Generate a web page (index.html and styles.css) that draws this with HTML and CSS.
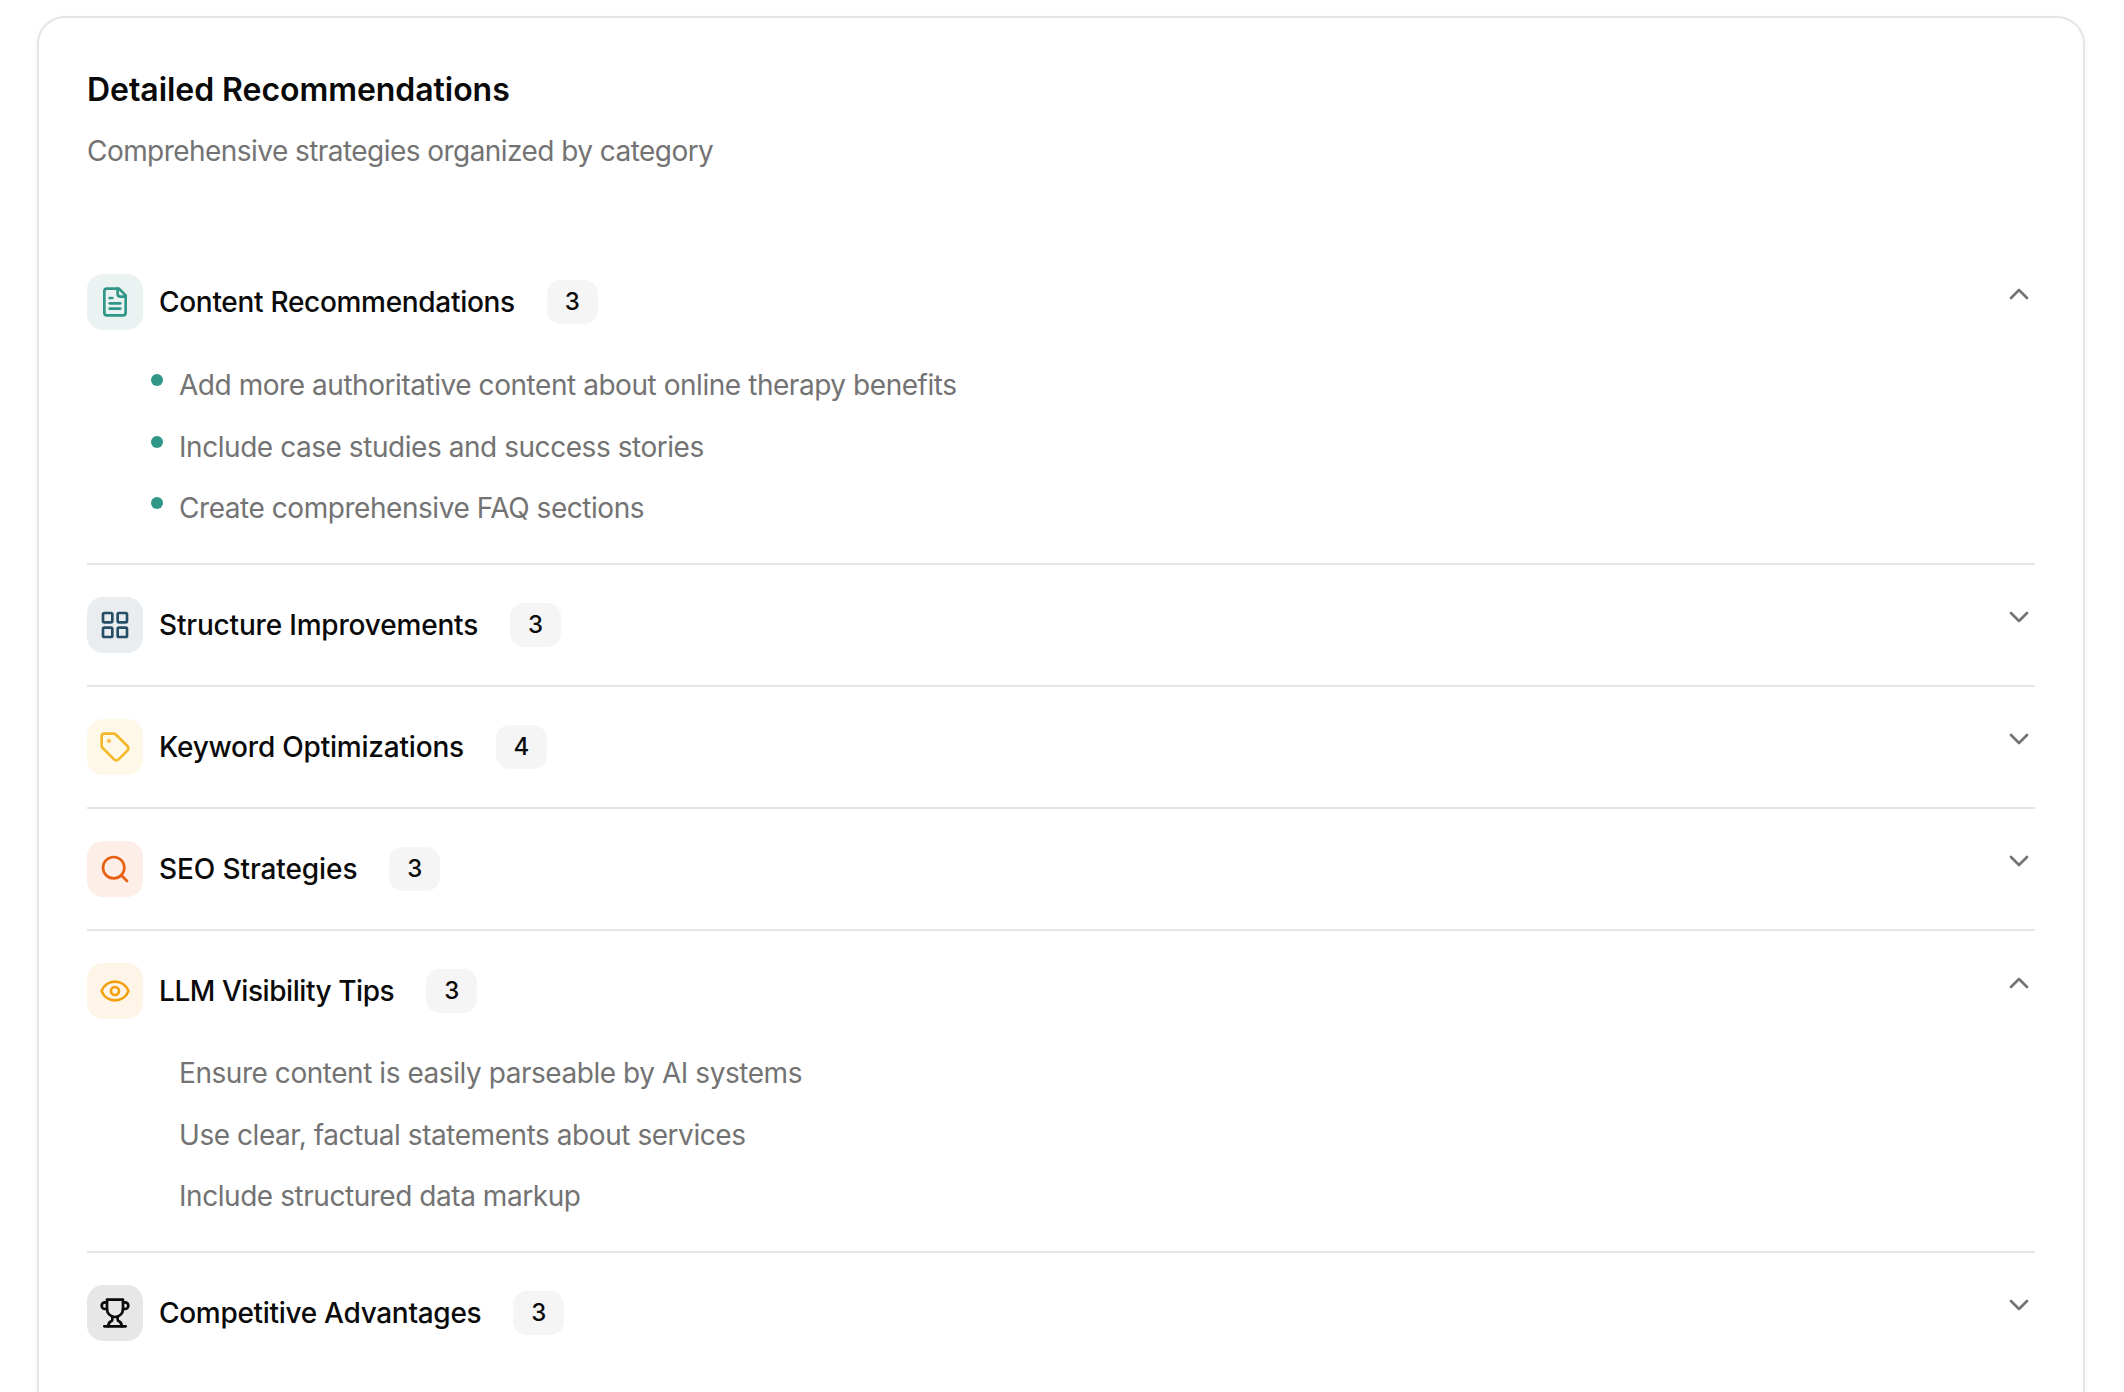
FILE: index.html
```html
<!DOCTYPE html>
<html lang="en">
<head>
<meta charset="utf-8">
<title>Detailed Recommendations</title>
<link rel="stylesheet" href="styles.css">
</head>
<body>
<main class="card">
  <header class="card-head">
    <h2 class="title">Detailed Recommendations</h2>
    <p class="subtitle">Comprehensive strategies organized by category</p>
  </header>
  <div class="sections">
    <section class="section">
      <div class="row">
        <span class="tile tile-teal"><svg class="icon" viewBox="0 0 24 24"><path d="M15 2H6a2 2 0 0 0-2 2v16a2 2 0 0 0 2 2h12a2 2 0 0 0 2-2V7Z"/><path d="M14 2v4a2 2 0 0 0 2 2h4"/><path d="M10 9H8"/><path d="M16 13H8"/><path d="M16 17H8"/></svg></span>
        <span class="name">Content Recommendations</span>
        <span class="count">3</span>
        <svg class="chev" viewBox="0 0 24 24"><path d="m18 15-6-6-6 6"/></svg>
      </div>
      <ul class="items bullets">
        <li>Add more authoritative content about online therapy benefits</li>
        <li>Include case studies and success stories</li>
        <li>Create comprehensive FAQ sections</li>
      </ul>
    </section>
    <section class="section">
      <div class="row">
        <span class="tile tile-slate"><svg class="icon" viewBox="0 0 24 24"><rect x="3" y="3" width="7" height="7" rx="1"/><rect x="14" y="3" width="7" height="7" rx="1"/><rect x="14" y="14" width="7" height="7" rx="1"/><rect x="3" y="14" width="7" height="7" rx="1"/></svg></span>
        <span class="name name-structure">Structure Improvements</span>
        <span class="count">3</span>
        <svg class="chev" viewBox="0 0 24 24"><path d="m6 9 6 6 6-6"/></svg>
      </div>
    </section>
    <section class="section">
      <div class="row">
        <span class="tile tile-yellow"><svg class="icon" viewBox="0 0 24 24"><path d="M12.586 2.586A2 2 0 0 0 11.172 2H4a2 2 0 0 0-2 2v7.172a2 2 0 0 0 .586 1.414l8.704 8.704a2.426 2.426 0 0 0 3.42 0l6.58-6.58a2.426 2.426 0 0 0 0-3.42z"/><circle class="dot" cx="7.5" cy="7.5" r=".5"/></svg></span>
        <span class="name name-keyword">Keyword Optimizations</span>
        <span class="count">4</span>
        <svg class="chev" viewBox="0 0 24 24"><path d="m6 9 6 6 6-6"/></svg>
      </div>
    </section>
    <section class="section">
      <div class="row">
        <span class="tile tile-orange"><svg class="icon" viewBox="0 0 24 24"><circle cx="11" cy="11" r="8"/><path d="m21 21-4.3-4.3"/></svg></span>
        <span class="name name-seo">SEO Strategies</span>
        <span class="count">3</span>
        <svg class="chev" viewBox="0 0 24 24"><path d="m6 9 6 6 6-6"/></svg>
      </div>
    </section>
    <section class="section">
      <div class="row">
        <span class="tile tile-amber"><svg class="icon" viewBox="0 0 24 24"><path d="M2.062 12.348a1 1 0 0 1 0-.696 10.75 10.75 0 0 1 19.876 0 1 1 0 0 1 0 .696 10.75 10.75 0 0 1-19.876 0"/><circle cx="12" cy="12" r="3"/></svg></span>
        <span class="name name-llm">LLM Visibility Tips</span>
        <span class="count">3</span>
        <svg class="chev" viewBox="0 0 24 24"><path d="m18 15-6-6-6 6"/></svg>
      </div>
      <ul class="items items-plain">
        <li>Ensure content is easily parseable by AI systems</li>
        <li>Use clear, factual statements about services</li>
        <li>Include structured data markup</li>
      </ul>
    </section>
    <section class="section">
      <div class="row">
        <span class="tile tile-gray"><svg class="icon" viewBox="0 0 24 24"><path d="M6 9H4.5a2.5 2.5 0 0 1 0-5H6"/><path d="M18 9h1.5a2.5 2.5 0 0 0 0-5H18"/><path d="M4 22h16"/><path d="M10 14.66V17c0 .55-.47.98-.97 1.21C7.85 18.75 7 20.24 7 22"/><path d="M14 14.66V17c0 .55.47.98.97 1.21C16.15 18.75 17 20.24 17 22"/><path d="M18 2H6v7a6 6 0 0 0 12 0V2Z"/></svg></span>
        <span class="name">Competitive Advantages</span>
        <span class="count">3</span>
        <svg class="chev" viewBox="0 0 24 24"><path d="m6 9 6 6 6-6"/></svg>
      </div>
    </section>
  </div>
</main>
</body>
</html>
```
FILE: styles.css
```css
* { box-sizing: border-box; }
html, body { margin: 0; height: 100%; overflow: hidden; background: #fff; }
body {
  padding: 16px 39px 0 37px;
  font-family: Inter, "Liberation Sans", sans-serif;
  color: #0a0a0a;
}
.card {
  height: 1376px;
  padding: 52px 48px 0;
  border: 2px solid #e5e5e5;
  border-bottom: 0;
  border-radius: 28px 28px 0 0;
  background: #fff;
  box-shadow: 0 2px 6px rgba(0, 0, 0, .05);
}
.card-head { margin-bottom: 71px; }
.title { margin: 0; font-size: 32px; line-height: 40px; font-weight: 600; letter-spacing: -.05px; }
.subtitle { margin: 21px 0 0; font-size: 28px; line-height: 40px; font-weight: 400; letter-spacing: -.55px; color: #737373; }
.section { border-bottom: 2px solid #e5e5e5; }
.section:last-child { border-bottom: 0; }
.row { display: flex; align-items: center; gap: 16px; position: relative; padding: 32px 0; }
.tile { flex: none; width: 56px; height: 56px; border-radius: 16px; display: flex; align-items: center; justify-content: center; }
.icon { width: 32px; height: 32px; fill: none; stroke: currentColor; stroke-width: 2; stroke-linecap: round; stroke-linejoin: round; }
.dot { fill: currentColor; }
.tile-teal { background: #eaf3f2; color: #2f9688; }
.tile-slate { background: #e9edf0; color: #264e65; }
.tile-yellow { background: #fef8e9; color: #f5b829; }
.tile-orange { background: #fdeee8; color: #e76110; }
.tile-amber { background: #fef5e8; color: #f49e0b; }
.tile-gray { background: #e7e7e7; color: #0a0a0a; }
.name { font-size: 28px; line-height: 40px; font-weight: 500; letter-spacing: -.3px; }
.name-structure { letter-spacing: -.18px; }
.name-keyword { letter-spacing: -.2px; }
.name-seo { letter-spacing: -.1px; }
.name-llm { letter-spacing: -.44px; }
.count { margin-left: 16px; min-width: 51px; height: 44px; padding: 0 16px; border-radius: 14px; background: #f5f5f5; font-size: 24px; line-height: 44px; font-weight: 500; text-align: center; }
.chev { position: absolute; right: 0; top: 36px; width: 32px; height: 32px; fill: none; stroke: #737373; stroke-width: 2; stroke-linecap: round; stroke-linejoin: round; }
.items { list-style: none; margin: 3px 0 0; padding: 0 0 35px 92px; display: flex; flex-direction: column; gap: 21.5px; }
.items-plain { margin-top: 2px; }
.items li { position: relative; font-size: 28px; line-height: 40px; letter-spacing: -.45px; color: #737373; }
.bullets li::before { content: ""; position: absolute; left: -28px; top: 9px; width: 12px; height: 12px; border-radius: 50%; background: #2f9688; }
```
